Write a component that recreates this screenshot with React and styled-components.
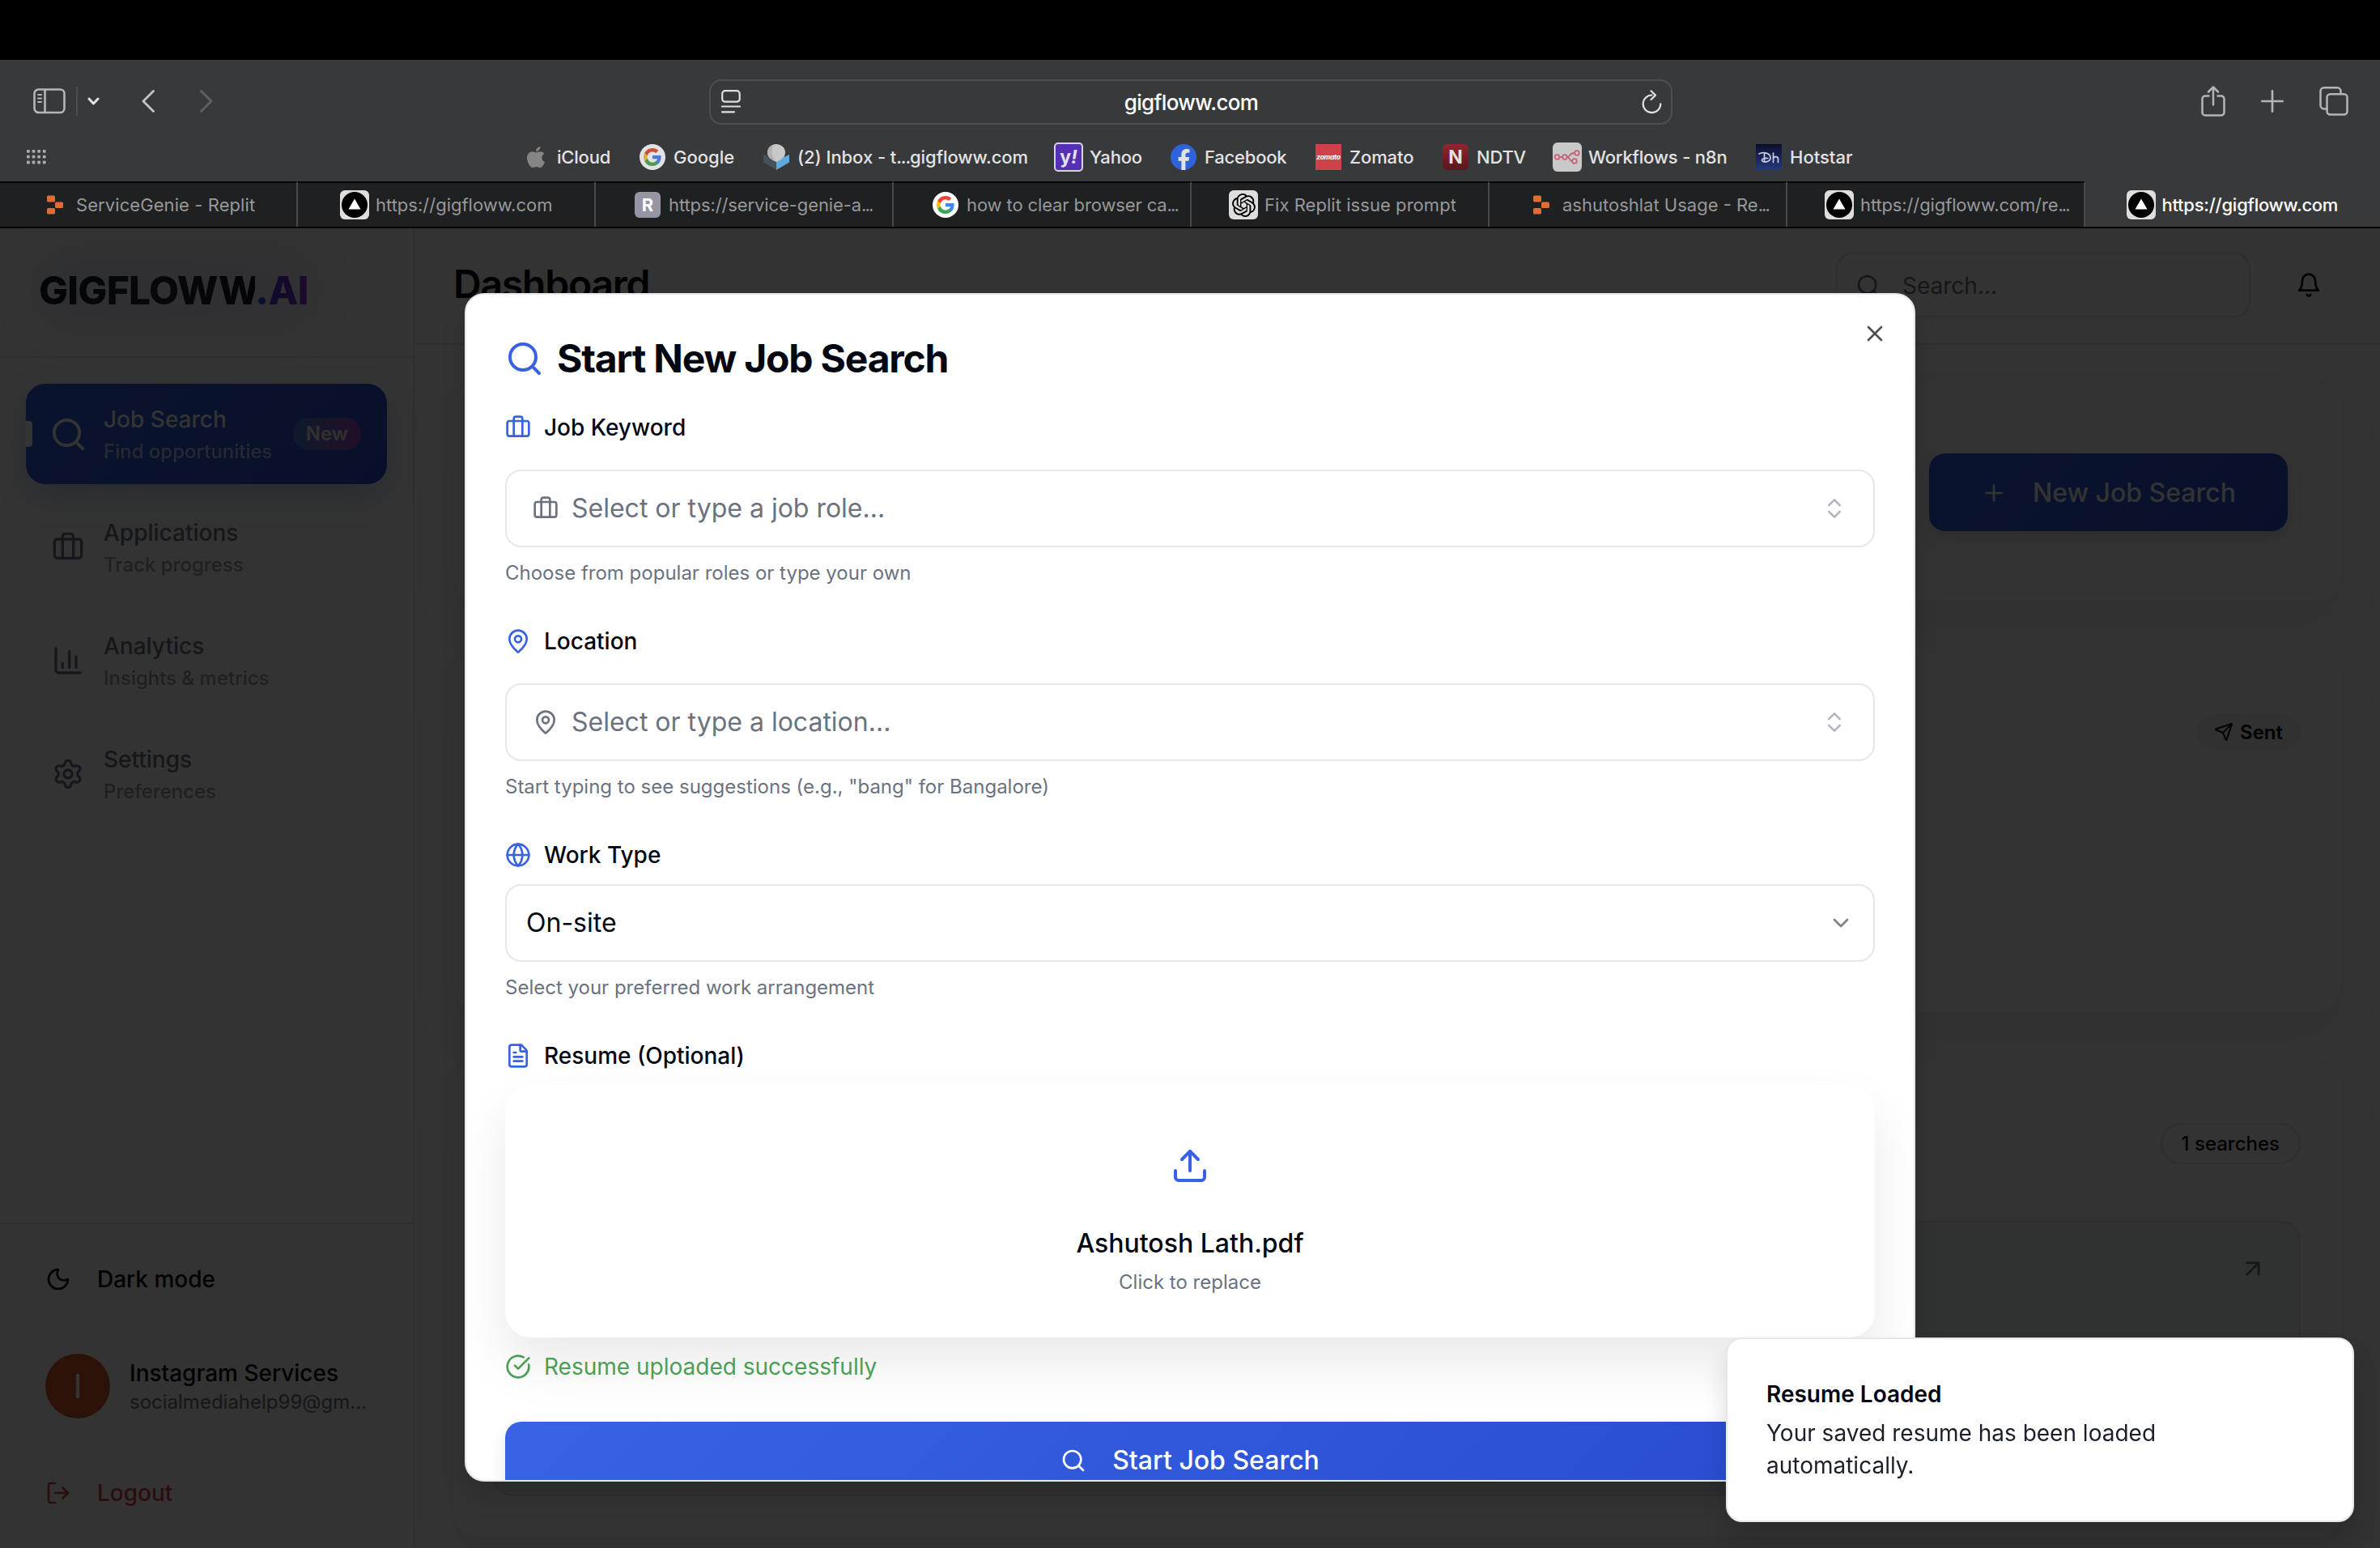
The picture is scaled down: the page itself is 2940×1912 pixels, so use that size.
import React from 'react';
import styled, { createGlobalStyle, css } from 'styled-components';
import {
  ArrowUpRight, Briefcase, ChartColumn, ChevronDown, ChevronsUpDown, CircleCheckBig, FileText, Globe,
  LogOut, MapPin, Moon, Plus, Search, Send, Settings, Upload, X,
} from 'lucide-react';
import { FaApple } from 'react-icons/fa';
import { SiOpenai } from 'react-icons/si';

const GlobalStyle = createGlobalStyle`
  * { box-sizing: border-box; }
  html, body { margin: 0; padding: 0; background: #000; }
  body { font-family: Inter, "Liberation Sans", sans-serif; color: #030712; overflow: hidden; }
  svg { display: block; flex-shrink: 0; }
`;

const colors = {
  ink: '#030712',
  muted: '#6b7280',
  line: '#e5e7eb',
  primary: '#3662e3',
  primaryDark: '#2a4dcf',
  chrome: '#38393b',
  strip: '#1e2022',
};

const Screen = styled.div`
  width: 2940px;
  height: 1912px;
  display: flex;
  flex-direction: column;
  overflow: hidden;
  background: #000;
`;

/* ---------- browser chrome ---------- */

const MenuBarSpace = styled.div`
  height: 74px;
  flex: none;
  background: #000;
`;

const Chrome = styled.header`
  height: 150px;
  flex: none;
  background: ${colors.chrome};
`;

const Toolbar = styled.div`
  height: 103px;
  display: grid;
  grid-template-columns: 1fr 1190px 1fr;
  align-items: center;
  padding: 0 39px 0 41px;
  color: #b4b5b6;
`;

const ToolGroup = styled.div`
  display: flex;
  align-items: center;
  gap: ${(p) => p.$gap || 0}px;
  padding-bottom: 2px;
  justify-content: ${(p) => (p.$end ? 'flex-end' : 'flex-start')};
`;

const ToolDivider = styled.span`
  width: 2px;
  height: 36px;
  margin: 0 12px 0 13px;
  background: #4c4d4f;
`;

const NavArrows = styled.div`
  display: flex;
  gap: 56px;
  margin-left: 52px;
`;

const AddressBar = styled.div`
  height: 56px;
  display: flex;
  align-items: center;
  justify-content: space-between;
  padding: 0 11px 0 13px;
  border: 2px solid #4e4f51;
  border-radius: 15px;
  color: #dfdfe0;
`;

const Address = styled.span`
  padding-top: 2px;
  font-size: 26px;
  font-weight: 500;
  letter-spacing: -0.65px;
  color: #fff;
`;

const BookmarkRow = styled.div`
  height: 34px;
  display: flex;
  align-items: center;
  padding-left: 32px;
`;

const BookmarkList = styled.div`
  display: flex;
  gap: 36px;
  margin-left: 588px;
`;

const Bookmark = styled.div`
  display: flex;
  align-items: center;
  gap: 10px;
`;

const BookmarkLabel = styled.span`
  width: ${(p) => p.$w}px;
  margin-top: -1px;
  font-size: 22px;
  font-weight: 500;
  line-height: 32px;
  letter-spacing: ${(p) => (p.$ls === undefined ? -0.2 : p.$ls)}px;
  white-space: nowrap;
  color: #e3e3e4;
`;

const Dots = styled.span`
  letter-spacing: ${(p) => (p.$tight ? -1.9 : -1.1)}px;
`;

const IconSlot = styled.span`
  width: 32px;
  height: 32px;
  flex: none;
  display: flex;
  align-items: center;
  justify-content: center;
`;

const Favicon = styled.span`
  width: ${(p) => p.$size || 32}px;
  height: ${(p) => p.$size || 32}px;
  flex: none;
  display: flex;
  align-items: center;
  justify-content: center;
  overflow: hidden;
  border-radius: ${(p) => (p.$r === undefined ? 6 : p.$r)}px;
  background: ${(p) => p.$bg || '#dedede'};
  color: ${(p) => p.$fg || '#fff'};
  font-size: ${(p) => p.$fs || 22}px;
  font-weight: 700;
  line-height: 1;
  ${(p) => p.$italic && css`font-style: italic;`}
  ${(p) => p.$border && css`border: 2px solid #d5d2e2;`}
  letter-spacing: ${(p) => p.$ls || 0}px;
`;

const TabStrip = styled.div`
  height: 58px;
  flex: none;
  display: grid;
  grid-template-columns: repeat(7, 368px) 1fr;
  border-bottom: 2px solid #050505;
`;

const Tab = styled.div`
  display: flex;
  align-items: center;
  justify-content: ${(p) => (p.$full ? 'flex-start' : 'center')};
  gap: 10px;
  min-width: 0;
  padding-left: ${(p) => (p.$full ? 48 : 0)}px;
  border-top: 2px solid ${(p) => (p.$active ? colors.chrome : '#050505')};
  border-right: ${(p) => (p.$active ? 'none' : '2px solid #48494b')};
  background: ${(p) => (p.$active ? colors.chrome : colors.strip)};
`;

const TabLabel = styled.span`
  width: ${(p) => p.$w}px;
  font-size: 22px;
  line-height: 32px;
  white-space: nowrap;
  letter-spacing: ${(p) => p.$ls || 0}px;
  font-weight: ${(p) => (p.$active ? 500 : 400)};
  color: ${(p) => (p.$active ? '#fff' : '#97989a')};
`;

/* ---------- application ---------- */

const Viewport = styled.div`
  position: relative;
  height: 1630px;
  flex: none;
  display: grid;
  grid-template-columns: 512px 1fr;
  overflow: hidden;
  background: #fcfcfc;
`;

const Sidebar = styled.aside`
  display: flex;
  flex-direction: column;
  height: 1630px;
  border-right: 2px solid #e4e5e9;
  background: #fcfcfc;
`;

const SidebarHead = styled.div`
  position: relative;
  height: 160px;
  display: flex;
  align-items: center;
  padding: 0 0 4px 48px;
  border-bottom: 2px solid #e4e5e9;
`;

const LogoGlow = styled.span`
  position: absolute;
  left: 40px;
  top: 30px;
  width: 350px;
  height: 90px;
  border-radius: 45px;
  background: linear-gradient(90deg, #2563eb, #9333ea);
  opacity: 0.1;
  filter: blur(30px);
`;

const Logo = styled.div`
  position: relative;
  font-size: 48px;
  font-weight: 800;
  line-height: 64px;
  letter-spacing: -0.75px;
  white-space: nowrap;
`;

const LogoPart = styled.span`
  background: ${(p) => p.$fill};
  -webkit-background-clip: text;
  background-clip: text;
  color: transparent;
`;

const Nav = styled.nav`
  flex: 1;
  display: flex;
  flex-direction: column;
  gap: 16px;
  padding: 32px;
`;

const NavItem = styled.a`
  position: relative;
  height: 124px;
  display: flex;
  align-items: center;
  gap: 24px;
  padding: 0 32px;
  border-radius: 24px;
  color: ${colors.muted};
  ${(p) => p.$active && css`
    color: #fff;
    background: linear-gradient(135deg, ${colors.primary}, ${colors.primaryDark});
    box-shadow: 0 16px 40px rgba(37, 99, 235, 0.2);
  `}
`;

const ActiveMark = styled.span`
  position: absolute;
  left: 0;
  top: 46px;
  width: 8px;
  height: 32px;
  border-radius: 0 4px 4px 0;
  background: #fff;
`;

const NavIcon = styled.span`
  width: 40px;
  height: 40px;
  display: flex;
  align-items: center;
  justify-content: center;
`;

const NavText = styled.span`
  display: flex;
  flex-direction: column;
  gap: 4px;
  white-space: nowrap;
`;

const NavTitle = styled.span`
  font-size: 28px;
  font-weight: 500;
  line-height: 40px;
`;

const NavHint = styled.span`
  font-size: 24px;
  font-weight: 500;
  line-height: 32px;
  opacity: 0.68;
`;

const NewBadge = styled.span`
  height: 40px;
  margin-left: auto;
  padding: 0 16px;
  border-radius: 20px;
  background: linear-gradient(90deg, #4a7fd6, #a848c4);
  font-size: 24px;
  font-weight: 600;
  line-height: 40px;
  color: #f0f0ee;
`;

const SidebarFoot = styled.div`
  height: 402px;
  display: flex;
  flex-direction: column;
  padding: 32px 0 32px 56px;
  border-top: 2px solid #e4e5e9;
`;

const FootAction = styled.div`
  height: 72px;
  display: flex;
  align-items: center;
  gap: 32px;
  font-size: 28px;
  font-weight: 500;
  color: ${(p) => (p.$danger ? '#dc4444' : colors.ink)};
`;

const Account = styled.div`
  flex: 1;
  display: flex;
  align-items: center;
  gap: 24px;
`;

const Avatar = styled.span`
  width: 80px;
  height: 80px;
  display: flex;
  align-items: center;
  justify-content: center;
  border-radius: 50%;
  background: #dd5c2e;
  color: #fff;
  font: 400 43px/80px Roboto, sans-serif;
`;

const AccountText = styled.div`
  display: flex;
  flex-direction: column;
  white-space: nowrap;
`;

const AccountName = styled.span`
  font-size: 28px;
  font-weight: 500;
  line-height: 40px;
`;

const AccountMail = styled.span`
  font-size: 24px;
  line-height: 32px;
  color: ${colors.muted};
`;

const Main = styled.main`
  display: flex;
  flex-direction: column;
  height: 1630px;
  min-width: 0;
`;

const TopBar = styled.div`
  height: 144px;
  flex: none;
  display: flex;
  align-items: center;
  padding: 0 72px 2px 48px;
  border-bottom: 2px solid #e6e7ea;
`;

const PageTitle = styled.h1`
  margin: 0 auto 0 0;
  padding-bottom: 3px;
  font-size: 48px;
  font-weight: 600;
  line-height: 64px;
  letter-spacing: -1.2px;
`;

const SearchBox = styled.div`
  width: 512px;
  height: 80px;
  display: flex;
  align-items: center;
  gap: 26px;
  margin-right: 56px;
  padding: 1px 22px 0;
  border: 2px solid #e2e4e8;
  border-radius: 20px;
  font-size: 28px;
  color: ${colors.muted};
`;

const Content = styled.div`
  display: flex;
  flex-direction: column;
  gap: 64px;
  padding: 48px;
`;

const Card = styled.section`
  height: ${(p) => p.$h}px;
  flex: none;
  padding: ${(p) => p.$pad || '50px'};
  border-radius: 32px;
  background: #fcfcfc;
  box-shadow: 0 32px 64px rgba(0, 0, 0, 0.05);
`;

const CardHead = styled.div`
  height: 96px;
  display: flex;
  align-items: center;
  justify-content: flex-end;
`;

const HeroButton = styled.button`
  height: 96px;
  display: flex;
  align-items: center;
  gap: 32px;
  padding: 2px 64px 0;
  border: 0;
  border-radius: 20px;
  background: linear-gradient(135deg, ${colors.primary}, ${colors.primaryDark});
  box-shadow: 0 8px 20px rgba(0, 0, 0, 0.12);
  color: #fff;
  font: 500 32px/48px Inter, sans-serif;
`;

const Pill = styled.span`
  height: ${(p) => (p.$outline ? 51 : 44)}px;
  display: flex;
  align-items: center;
  gap: 8px;
  padding: 0 ${(p) => (p.$outline ? 24 : 20)}px;
  border: 2px solid ${(p) => (p.$outline ? '#e2e4e8' : 'transparent')};
  border-radius: 26px;
  background: ${(p) => (p.$outline ? 'transparent' : '#f2f2f3')};
  font-size: 24px;
  font-weight: ${(p) => (p.$outline ? 500 : 600)};
`;

const ResultCard = styled.div`
  height: 340px;
  display: flex;
  justify-content: flex-end;
  align-items: flex-start;
  margin-top: 48px;
  padding: 40px;
  border: 2px solid #e0e9e5;
  border-radius: 24px;
  background: #f0f6f3;
  color: ${colors.muted};
`;

const Overlay = styled.div`
  position: absolute;
  inset: 0;
  background: rgba(0, 0, 0, 0.8);
`;

/* ---------- dialog ---------- */

const Dialog = styled.div`
  position: absolute;
  left: 574px;
  top: 80px;
  width: 1792px;
  height: 1468px;
  display: flex;
  flex-direction: column;
  gap: 32px;
  overflow: hidden;
  padding: 48px;
  border: 2px solid ${colors.line};
  border-radius: 24px;
  background: #fff;
  box-shadow: 0 20px 30px rgba(0, 0, 0, 0.12);
`;

const DialogTitle = styled.h2`
  height: 64px;
  flex: none;
  display: flex;
  align-items: center;
  gap: 16px;
  margin: 0;
  padding-bottom: 3px;
  font-size: 48px;
  font-weight: 700;
  line-height: 61px;
  letter-spacing: -1.2px;
`;

const CloseButton = styled.span`
  position: absolute;
  right: 32px;
  top: 32px;
  opacity: 0.7;
`;

const Form = styled.form`
  display: flex;
  flex-direction: column;
  gap: 48px;
`;

const Field = styled.div`
  display: flex;
  flex-direction: column;
`;

const FieldLabel = styled.label`
  height: 40px;
  display: flex;
  align-items: center;
  gap: 16px;
  margin-bottom: ${(p) => (p.$tight ? 16 : 32)}px;
  font-size: 28px;
  font-weight: 500;
  svg { color: ${colors.primary}; }
`;

const Combo = styled.div`
  height: 96px;
  display: flex;
  align-items: center;
  gap: 16px;
  padding: ${(p) => (p.$select ? '0 24px' : '0 32px')};
  border: 2px solid ${colors.line};
  border-radius: 20px;
  background: #fff;
  font-size: 32px;
  line-height: 48px;
  color: ${(p) => (p.$select ? colors.ink : colors.muted)};
`;

const Trailing = styled.span`
  margin-left: auto;
  opacity: 0.5;
`;

const Help = styled.p`
  margin: 16px 0 0;
  font-size: 24px;
  line-height: 32px;
  color: ${colors.muted};
`;

const UploadCard = styled.div`
  height: 312px;
  display: flex;
  flex-direction: column;
  align-items: center;
  padding: 48px;
  border-radius: 32px;
  background: #fff;
  box-shadow: 0 32px 64px rgba(0, 0, 0, 0.085);
`;

const UploadIcon = styled.span`
  height: 104px;
  display: flex;
  align-items: center;
  margin-bottom: 20px;
  color: ${colors.primary};
`;

const FileName = styled.span`
  font-size: 32px;
  font-weight: 500;
  line-height: 48px;
`;

const FileHint = styled.span`
  margin-top: 8px;
  font-size: 24px;
  line-height: 32px;
  color: ${colors.muted};
`;

const Success = styled.div`
  height: 40px;
  display: flex;
  align-items: center;
  gap: 16px;
  margin-top: 16px;
  font-size: 28px;
  color: #4b9f55;
`;

const Submit = styled.button`
  height: 96px;
  flex: none;
  display: flex;
  align-items: center;
  justify-content: center;
  gap: 32px;
  border: 0;
  border-radius: 20px;
  background: linear-gradient(135deg, #3863e5, #294bce);
  box-shadow: 0 8px 20px rgba(0, 0, 0, 0.1);
  color: #fff;
  font: 500 32px/48px Inter, sans-serif;
`;

const Toast = styled.div`
  position: absolute;
  right: 32px;
  bottom: 32px;
  width: 776px;
  height: 228px;
  display: flex;
  flex-direction: column;
  gap: 8px;
  padding: 48px 160px 48px 48px;
  border: 2px solid ${colors.line};
  border-radius: 20px;
  background: #fff;
  box-shadow: 0 20px 30px rgba(0, 0, 0, 0.14);
  font-size: 28px;
  line-height: 40px;
`;

const ToastTitle = styled.strong`
  font-weight: 600;
`;

const ToastText = styled.span`
  opacity: 0.9;
`;

/* ---------- drawings ---------- */

const stroke = { fill: 'none', stroke: 'currentColor', strokeLinecap: 'round', strokeLinejoin: 'round' };

const SidebarIcon = () => (
  <svg width="40" height="32" viewBox="0 0 40 32" {...stroke} strokeWidth="2.6">
    <rect x="1.5" y="1.5" width="37" height="28.5" rx="5" />
    <path d="M14.5 2v28" strokeLinecap="butt" />
    <path d="M6 8h4M6 12.5h4M6 17h4" strokeWidth="2" />
  </svg>
);
const SmallChevron = () => (
  <svg width="15" height="10" viewBox="0 0 15 10" {...stroke} stroke="#e2e2e3" strokeWidth="3">
    <path d="M2 2l5.5 6L13 2" />
  </svg>
);
const BackIcon = () => (
  <svg width="16" height="28" viewBox="0 0 16 28" {...stroke} stroke="#c4c5c6" strokeWidth="2.8">
    <path d="M14.5 1.5L2 14l12.500 12.500" />
  </svg>
);
const ForwardIcon = () => (
  <svg width="16" height="28" viewBox="0 0 16 28" {...stroke} stroke="#5f6062" strokeWidth="2.8">
    <path d="M1.500 1.500L14 14L1.500 26.500" />
  </svg>
);
const ReaderIcon = () => (
  <svg width="24" height="29" viewBox="0 0 24 29" {...stroke} strokeWidth="2.2">
    <rect x="1.200" y="1.200" width="21.500" height="13.500" rx="3.500" />
    <path d="M1 20.500h22M1 27.300h15" />
  </svg>
);
const ReloadIcon = () => (
  <svg width="25" height="30" viewBox="0 0 25 30" {...stroke} strokeWidth="2.200">
    <path d="M12.500 6.500A10.800 10.800 0 1 0 23.300 17.300" />
    <path d="M11.500 1.300L17 6.600L11.500 12" />
  </svg>
);
const ShareIcon = () => (
  <svg width="30" height="38" viewBox="0 0 30 38" {...stroke} strokeWidth="2.500">
    <path d="M9.500 12.500H5a3.500 3.500 0 0 0-3.500 3.500V33A3.500 3.500 0 0 0 5 36.500H25A3.500 3.500 0 0 0 28.500 33V16A3.500 3.500 0 0 0 25 12.500H20.500" />
    <path d="M15 23.500V2M9 7.500L15 1.500l6 6" />
  </svg>
);
const NewTabIcon = () => (
  <svg width="28" height="28" viewBox="0 0 28 28" {...stroke} strokeWidth="2.600">
    <path d="M14 1.300v25.400M1.300 14h25.400" />
  </svg>
);
const TabsIcon = () => (
  <svg width="36" height="36" viewBox="0 0 36 36" {...stroke} strokeWidth="2.500">
    <rect x="9.500" y="9.300" width="25" height="25.200" rx="4" />
    <path d="M9.500 27.500H6A4.500 4.500 0 0 1 1.500 23V5.500A4.500 4.500 0 0 1 6 1.300H22A4.500 4.500 0 0 1 26.500 5.500V9" />
  </svg>
);
const DotsIcon = () => (
  <svg width="26" height="20" viewBox="0 0 26 20" fill="#a9aaab">
    {[0, 1, 2].map((r) => [0, 1, 2, 3].map((c) => (
      <rect key={`${r}-${c}`} x={1 + c * 6.600} y={1 + r * 6.800} width="3.800" height="3.800" rx="1" />
    )))}
  </svg>
);
const GoogleIcon = ({ bg = '#e2e2e2', soft }) => (
  <svg width="32" height="32" viewBox="0 0 32 32">
    <circle cx="16" cy="16" r="16" fill={bg} />
    <g transform="translate(4 4)">
      <path fill={soft ? '#4a7bd8' : '#4285f4'} d="M22.560 12.250c0-.78-.07-1.530-.2-2.250H12v4.260h5.920a5.060 5.060 0 0 1-2.200 3.320v2.770h3.570c2.080-1.920 3.270-4.740 3.270-8.100z" />
      <path fill={soft ? '#4f9a54' : '#34a853'} d="M12 23c2.970 0 5.460-.98 7.280-2.660l-3.570-2.770c-.98.66-2.230 1.060-3.710 1.060-2.860 0-5.290-1.930-6.160-4.530H2.180v2.840A11 11 0 0 0 12 23z" />
      <path fill={soft ? '#dcae3c' : '#fbbc05'} d="M5.840 14.090a6.600 6.600 0 0 1 0-4.180V7.070H2.180a11 11 0 0 0 0 9.860l3.660-2.840z" />
      <path fill={soft ? '#c94f3e' : '#ea4335'} d="M12 5.380c1.620 0 3.060.56 4.210 1.640l3.150-3.150C17.450 2.090 14.970 1 12 1A11 11 0 0 0 2.180 7.070l3.660 2.840C6.710 7.310 9.140 5.380 12 5.380z" />
    </g>
  </svg>
);
const InboxIcon = () => (
  <svg width="32" height="32" viewBox="0 0 32 32">
    <path d="M0 13L16 20V32L0 22.500z" fill="#455259" />
    <path d="M32 13L16 20V32l16-9.500z" fill="#5fa9dc" />
    <path d="M16 22C9 19 5 15.500 5 10.500A11 10.500 0 0 1 27 10.500C27 15.500 23 19 16 22z" fill="#c9c9c9" />
    <path d="M16 22C9 19 5 15.500 5 10.500A11 10.500 0 0 1 14 .3C9 5 9 15 16 22z" fill="#b2b2b2" />
  </svg>
);
const FacebookIcon = () => (
  <svg width="32" height="32" viewBox="0 0 32 32">
    <circle cx="16" cy="16" r="16" fill="#2f63d9" />
    <path fill="#e2e2e2" d="M13.400 32V20.800H9.600V16h3.800v-2.600c0-5 2.300-7.300 7-7.300.9 0 2.300.2 3 .4v4.200c-.3 0-1-.1-1.700-.1-2.400 0-3.300.9-3.300 3.200V16h4.700l-.8 4.800h-3.900V32z" />
  </svg>
);
const VercelIcon = () => (
  <svg width="36" height="36" viewBox="0 0 36 36">
    <rect width="36" height="36" rx="6" fill="#dedede" />
    <circle cx="18" cy="18" r="16" fill="#000" />
    <path d="M18 10.500L25.500 23.500H10.500z" fill="#fff" />
  </svg>
);
const ReplitIcon = () => (
  <svg width="32" height="32" viewBox="0 0 32 32" fill="#e06c33">
    <rect x="6" y="4.500" width="10" height="8" rx="1.500" />
    <rect x="16" y="12.500" width="10" height="7.600" rx="1.500" />
    <rect x="6" y="20" width="10" height="7.500" rx="1.500" />
  </svg>
);
const N8nIcon = () => (
  <svg width="34" height="34" viewBox="0 0 34 34" fill="none" stroke="#c9607a" strokeWidth="1.800">
    <circle cx="4.500" cy="17" r="2.800" />
    <circle cx="14" cy="17" r="2.800" />
    <circle cx="29" cy="12" r="2.800" />
    <circle cx="26" cy="22" r="2.800" />
    <path d="M7.300 17h4M16.800 17c4 0 2-5 9.300-5M16.800 17c4 0 2 5 6.400 5" />
  </svg>
);
const HotstarIcon = () => (
  <svg width="32" height="32" viewBox="0 0 32 32">
    <defs>
      <linearGradient id="hs" x1="0" y1="0" x2="0" y2="1">
        <stop offset="0" stopColor="#0b0d2c" />
        <stop offset="1" stopColor="#253a7c" />
      </linearGradient>
    </defs>
    <rect width="32" height="32" fill="url(#hs)" />
    <g fill="none" stroke="#c9cce0" strokeWidth="1.700" strokeLinecap="round">
      <path d="M4 12c5-3 14-1 14 5 0 5-8 6-10 4-2-3 3-4 7-3.500M10.500 12v9.500" />
      <path d="M21.500 11v11.500M21.500 18c.5-3 6-3.500 6 .5v4" />
    </g>
  </svg>
);
const Bell = () => (
  <svg width="32" height="32" viewBox="0 0 24 24" {...stroke} strokeWidth="2">
    <path d="M6 8a6 6 0 0 1 12 0c0 7 3 9 3 9H3s3-2 3-9" />
    <path d="M10.300 21a1.940 1.940 0 0 0 3.400 0" />
  </svg>
);

const bookmarks = [
  { label: 'iCloud', w: 66, icon: <FaApple size={30} color="#858585" /> },
  { label: 'Google', w: 75, ls: 0, icon: <GoogleIcon soft /> },
  { label: <>(2) Inbox - t<Dots>...</Dots>gigfloww.com</>, w: 283, ls: -0.05, icon: <InboxIcon /> },
  { label: 'Yahoo', w: 64, icon: <Favicon $size={36} $bg="#5630b4" $fg="#e4e0f0" $border $fs={23} $r={5}>y<i>!</i></Favicon> },
  { label: 'Facebook', w: 101, icon: <FacebookIcon /> },
  { label: 'Zomato', w: 79, ls: -0.1, icon: <Favicon $bg="#cf4249" $fs={8.500} $italic $r={0} $ls={-0.300}>zomato</Favicon> },
  { label: 'NDTV', w: 60, icon: <Favicon $bg="linear-gradient(#8f2730, #5a171d)" $fs={23} $fg="#e2e2e2">N</Favicon> },
  { label: 'Workflows - n8n', w: 171, ls: -0.2, icon: <Favicon $size={36} $bg="#c9c9c9"><N8nIcon /></Favicon> },
  { label: 'Hotstar', w: 80, ls: 0, icon: <HotstarIcon /> },
];

const tabs = [
  { label: 'ServiceGenie - Replit', w: 220, ls: 0.08, icon: <ReplitIcon /> },
  { label: 'https://gigfloww.com', w: 216, icon: <VercelIcon /> },
  { label: 'https://service-genie-a', cut: true, ls: -0.1, w: 255, icon: <Favicon $bg="#9695a4">R</Favicon> },
  { label: 'how to clear browser ca', cut: true, ls: -0.12, w: 262, icon: <GoogleIcon bg="#fff" /> },
  { label: 'Fix Replit issue prompt', full: true, ls: 0.05, w: 238, icon: <Favicon $size={36} $fg="#000"><SiOpenai size={29} /></Favicon> },
  { label: 'ashutoshlat Usage - Re', cut: true, w: 256, icon: <ReplitIcon /> },
  { label: 'https://gigfloww.com/re', cut: true, ls: -0.12, w: 256, icon: <VercelIcon /> },
  { label: 'https://gigfloww.com', w: 217, ls: -0.25, icon: <VercelIcon />, active: true },
];

const navItems = [
  { title: 'Job Search', hint: 'Find opportunities', Icon: Search, active: true },
  { title: 'Applications', hint: 'Track progress', Icon: Briefcase },
  { title: 'Analytics', hint: 'Insights & metrics', Icon: ChartColumn },
  { title: 'Settings', hint: 'Preferences', Icon: Settings },
];

function BrowserChrome() {
  return (
    <>
      <MenuBarSpace />
      <Chrome>
        <Toolbar>
          <ToolGroup>
            <SidebarIcon />
            <ToolDivider />
            <SmallChevron />
            <NavArrows>
              <BackIcon />
              <ForwardIcon />
            </NavArrows>
          </ToolGroup>
          <AddressBar>
            <ReaderIcon />
            <Address>gigfloww.com</Address>
            <ReloadIcon />
          </AddressBar>
          <ToolGroup $end $gap={44}>
            <ShareIcon />
            <NewTabIcon />
            <TabsIcon />
          </ToolGroup>
        </Toolbar>
        <BookmarkRow>
          <DotsIcon />
          <BookmarkList>
            {bookmarks.map((b, i) => (
              <Bookmark key={i}>
                <IconSlot>{b.icon}</IconSlot>
                <BookmarkLabel $w={b.w} $ls={b.ls}>{b.label}</BookmarkLabel>
              </Bookmark>
            ))}
          </BookmarkList>
        </BookmarkRow>
      </Chrome>
      <TabStrip>
        {tabs.map((t, i) => (
          <Tab key={i} $active={t.active} $full={t.cut || t.full}>
            <IconSlot>{t.icon}</IconSlot>
            <TabLabel $w={t.w} $ls={t.ls} $active={t.active}>
              {t.label}
              {t.cut && <Dots $tight>...</Dots>}
            </TabLabel>
          </Tab>
        ))}
      </TabStrip>
    </>
  );
}

function AppSidebar() {
  return (
    <Sidebar>
      <SidebarHead>
        <LogoGlow />
        <Logo>
          <LogoPart $fill="linear-gradient(90deg, #111827, #1f2937 50%, #111827)">GIGFLOWW</LogoPart>
          <LogoPart $fill="linear-gradient(90deg, #2f5fe6, #5b2fd0 40%, #8a35dc)">.AI</LogoPart>
        </Logo>
      </SidebarHead>
      <Nav>
        {navItems.map(({ title, hint, Icon, active }) => (
          <NavItem key={title} $active={active}>
            {active && <ActiveMark />}
            <NavIcon><Icon size={active ? 47 : 40} strokeWidth={2} /></NavIcon>
            <NavText>
              <NavTitle>{title}</NavTitle>
              <NavHint>{hint}</NavHint>
            </NavText>
            {active && <NewBadge>New</NewBadge>}
          </NavItem>
        ))}
      </Nav>
      <SidebarFoot>
        <FootAction><Moon size={32} />Dark mode</FootAction>
        <Account>
          <Avatar>I</Avatar>
          <AccountText>
            <AccountName>Instagram Services</AccountName>
            <AccountMail>socialmediahelp99@gm...</AccountMail>
          </AccountText>
        </Account>
        <FootAction $danger><LogOut size={32} />Logout</FootAction>
      </SidebarFoot>
    </Sidebar>
  );
}

function Dashboard() {
  return (
    <Main>
      <TopBar>
        <PageTitle>Dashboard</PageTitle>
        <SearchBox><Search size={32} />Search...</SearchBox>
        <Bell />
      </TopBar>
      <Content>
        <Card $h={268} $pad="86px 66px">
          <CardHead><HeroButton><Plus size={32} />New Job Search</HeroButton></CardHead>
        </Card>
        <Card $h={444}>
          <CardHead><Pill><Send size={24} />Sent</Pill></CardHead>
        </Card>
        <Card $h={584}>
          <CardHead><Pill $outline>1 searches</Pill></CardHead>
          <ResultCard><ArrowUpRight size={34} /></ResultCard>
        </Card>
      </Content>
    </Main>
  );
}

function JobSearchDialog() {
  return (
    <Dialog>
      <DialogTitle><Search size={48} color={colors.primary} />Start New Job Search</DialogTitle>
      <CloseButton><X size={32} /></CloseButton>
      <Form>
        <Field>
          <FieldLabel><Briefcase size={32} />Job Keyword</FieldLabel>
          <Combo>
            <Briefcase size={32} />
            Select or type a job role...
            <Trailing><ChevronsUpDown size={32} /></Trailing>
          </Combo>
          <Help>Choose from popular roles or type your own</Help>
        </Field>
        <Field>
          <FieldLabel><MapPin size={32} />Location</FieldLabel>
          <Combo>
            <MapPin size={32} />
            Select or type a location...
            <Trailing><ChevronsUpDown size={32} /></Trailing>
          </Combo>
          <Help>Start typing to see suggestions (e.g., "bang" for Bangalore)</Help>
        </Field>
        <Field>
          <FieldLabel $tight><Globe size={32} />Work Type</FieldLabel>
          <Combo $select>
            On-site
            <Trailing><ChevronDown size={32} /></Trailing>
          </Combo>
          <Help>Select your preferred work arrangement</Help>
        </Field>
        <Field>
          <FieldLabel $tight><FileText size={32} />Resume (Optional)</FieldLabel>
          <UploadCard>
            <UploadIcon><Upload size={48} /></UploadIcon>
            <FileName>Ashutosh Lath.pdf</FileName>
            <FileHint>Click to replace</FileHint>
          </UploadCard>
          <Success><CircleCheckBig size={32} />Resume uploaded successfully</Success>
        </Field>
        <Submit type="button"><Search size={32} />Start Job Search</Submit>
      </Form>
    </Dialog>
  );
}

export default function App() {
  return (
    <Screen>
      <GlobalStyle />
      <BrowserChrome />
      <Viewport>
        <AppSidebar />
        <Dashboard />
        <Overlay />
        <JobSearchDialog />
        <Toast>
          <ToastTitle>Resume Loaded</ToastTitle>
          <ToastText>Your saved resume has been loaded automatically.</ToastText>
        </Toast>
      </Viewport>
    </Screen>
  );
}
